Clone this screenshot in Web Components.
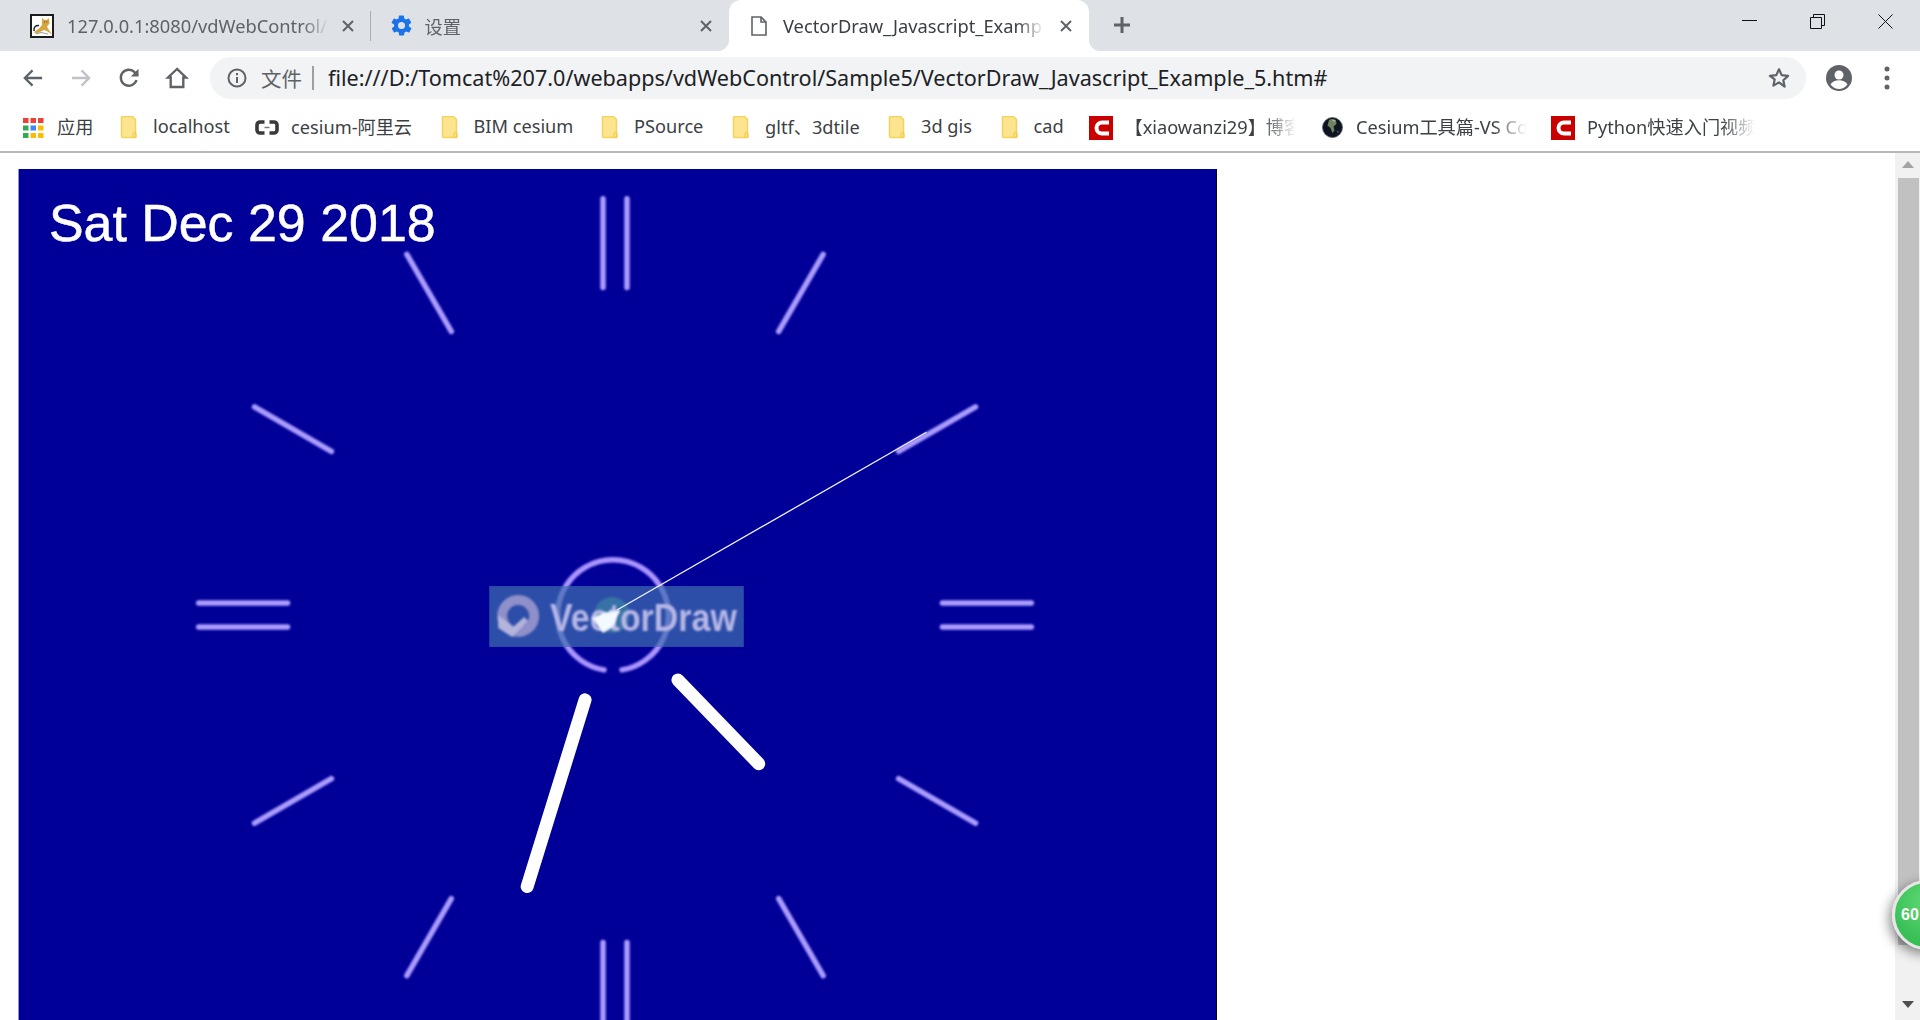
<!DOCTYPE html>
<html>
<head>
<meta charset="utf-8">
<title>VectorDraw_Javascript_Example_5</title>
<style>
html, body { margin: 0; height: 100%; overflow: hidden; background: #fff; }
body { display: flex; flex-direction: column; font-family: "Noto Sans", "Noto Sans CJK SC", sans-serif; }
</style>
</head>
<body>
<tab-strip>
  <browser-tab width="371" pad="30" gap="13" title-width="262" sep>
    <svg slot="icon" width="24" height="24" viewBox="0 0 24 24"><rect x="1" y="1" width="22" height="22" fill="#fff" stroke="#1c1c1c" stroke-width="2"/><path d="M12 4l2 1.800h3L19 4l.5 5.500-2.500 3 1 2 4 6-4.500-3-3.500-1.500-5 2.500-3.500 1-1.500-1.500 5-3.500 3-3.500z" fill="#d8a640"/><path d="M9 11.500C6 11 3.500 13 4 17" fill="none" stroke="#222" stroke-width="1.500"/><path d="M6 20l5-1.500 7 1.500" fill="none" stroke="#999" stroke-width="1"/><path d="M14 8h.8M16.500 8h.8" stroke="#333"/></svg>
    127.0.0.1:8080/vdWebControl/
  </browser-tab>
  <browser-tab width="358" pad="19.5" gap="13" title-width="240">
    <svg slot="icon" width="21" height="21" viewBox="1.500 1.500 21 21"><path fill="#1a73e8" d="M19.400 13a7.600 7.600 0 0 0 0-2l2.100-1.600a.5.5 0 0 0 .1-.6l-2-3.500a.5.5 0 0 0-.6-.2l-2.500 1a7.300 7.300 0 0 0-1.700-1l-.4-2.700a.5.5 0 0 0-.5-.4h-4a.5.5 0 0 0-.5.4l-.4 2.700a7.600 7.600 0 0 0-1.700 1l-2.500-1a.5.5 0 0 0-.6.2l-2 3.500a.5.5 0 0 0 .1.6L4.600 11a7.600 7.600 0 0 0 0 2l-2.100 1.600a.5.5 0 0 0-.1.6l2 3.500a.5.5 0 0 0 .6.2l2.500-1a7.300 7.300 0 0 0 1.700 1l.4 2.700a.5.5 0 0 0 .5.4h4a.5.5 0 0 0 .5-.4l.4-2.700a7.600 7.600 0 0 0 1.700-1l2.500 1a.5.5 0 0 0 .6-.2l2-3.500a.5.5 0 0 0-.1-.6zM12 15.500a3.500 3.500 0 1 1 0-7 3.500 3.500 0 0 1 0 7z"/></svg>
    设置
  </browser-tab>
  <browser-tab width="360" pad="22" gap="16" title-width="261" active>
    <svg slot="icon" width="16" height="20" viewBox="0 0 16 20"><path d="M1 1h9l5 5v13H1z M10 1v5h5" fill="#fff" stroke="#5f6368" stroke-width="1.600"/></svg>
    VectorDraw_Javascript_Example_5
  </browser-tab>
  <svg class="plus" width="20" height="20" viewBox="0 0 20 20"><path d="M10 2v16M2 10h16" stroke="#5f6368" stroke-width="3"/></svg>
  <window-buttons></window-buttons>
</tab-strip>
<nav-bar url="file:///D:/Tomcat%207.0/webapps/vdWebControl/Sample5/VectorDraw_Javascript_Example_5.htm#"></nav-bar>
<bookmark-bar>
  <bookmark-item icon="apps" w="36">应用</bookmark-item>
  <bookmark-item icon="folder" w="78">localhost</bookmark-item>
  <bookmark-item icon="cloud" w="122.500">cesium-阿里云</bookmark-item>
  <bookmark-item icon="folder" w="100.500">BIM cesium</bookmark-item>
  <bookmark-item icon="folder" w="71">PSource</bookmark-item>
  <bookmark-item icon="folder" w="96">gltf、3dtile</bookmark-item>
  <bookmark-item icon="folder" w="52.500">3d gis</bookmark-item>
  <bookmark-item icon="folder" w="31">cad</bookmark-item>
  <bookmark-item icon="csdn" w="171.500" fade>【xiaowanzi29】博客</bookmark-item>
  <bookmark-item icon="globe" w="171" fade>Cesium工具篇-VS Code</bookmark-item>
  <bookmark-item icon="csdn" w="168" fade>Python快速入门视频</bookmark-item>
</bookmark-bar>
<page-view>
  <clock-canvas date="Sat Dec 29 2018"></clock-canvas>
</page-view>
<fps-badge>60</fps-badge>

<script>
const X_ICON = '<svg width="12" height="12" viewBox="0 0 12 12"><path d="M1 1l10 10M11 1L1 11" stroke="#5f6368" stroke-width="2"/></svg>';

class TabStrip extends HTMLElement {
  constructor() {
    super();
    this.attachShadow({ mode: 'open' }).innerHTML = `
<style>
:host { display: flex; align-items: flex-end; height: 51px; background: #dee1e6; flex: none; position: relative; }
::slotted(svg.plus) { align-self: center; margin-left: 23px; margin-top: -1px; }
</style>
<slot></slot>`;
  }
}

class BrowserTab extends HTMLElement {
  constructor() {
    super();
    const w = this.getAttribute('width');
    const pad = this.getAttribute('pad');
    const gap = this.getAttribute('gap');
    const tw = this.getAttribute('title-width');
    const flare = 'content: ""; position: absolute; bottom: 0; width: 12px; height: 12px;';
    this.attachShadow({ mode: 'open' }).innerHTML = `
<style>
:host { display: flex; align-items: center; height: 51px; width: ${w}px; box-sizing: border-box; padding-left: ${pad}px; position: relative; flex: none; color: #5f6368; font-size: 18.3px; }
:host([active]) { background: #fff; border-radius: 12px 12px 0 0; color: #3c4043; }
:host([active])::before { ${flare} left: -12px; background: radial-gradient(circle at 0 0, transparent 12px, #fff 12.500px); }
:host([active])::after { ${flare} right: -12px; background: radial-gradient(circle at 100% 0, transparent 12px, #fff 12.500px); }
:host([sep])::after { content: ''; position: absolute; right: 0; top: 11px; height: 30px; width: 1px; background: #a9acb1; }
.icon { display: flex; flex: none; }
.title { width: ${tw}px; margin-left: ${gap}px; white-space: nowrap; overflow: hidden; -webkit-mask-image: linear-gradient(90deg, #000 90%, transparent); mask-image: linear-gradient(90deg, #000 90%, transparent); }
.close { display: flex; margin-left: auto; margin-right: 17px; }
</style>
<span class="icon"><slot name="icon"></slot></span>
<span class="title"><slot></slot></span>
<span class="close">${X_ICON}</span>`;
  }
}

class WindowButtons extends HTMLElement {
  constructor() {
    super();
    this.attachShadow({ mode: 'open' }).innerHTML = `
<style>
:host { display: flex; position: absolute; right: 27px; top: 14px; gap: 53px; }
svg { display: block; }
</style>
<svg width="15" height="15" viewBox="0 0 15 15"><path d="M0 6.500h15" stroke="#111" stroke-width="1"/></svg>
<svg width="15" height="15" viewBox="0 0 15 15"><path d="M.5 3.500h11v11H.5zM3.500 3V.5h11v11H12" fill="none" stroke="#111"/></svg>
<svg width="15" height="15" viewBox="0 0 15 15"><path d="M.5.5l14 14M14.500 .5l-14 14" stroke="#111" fill="none"/></svg>`;
  }
}

class NavBar extends HTMLElement {
  constructor() {
    super();
    this.attachShadow({ mode: 'open' }).innerHTML = `
<style>
:host { display: flex; align-items: center; height: 53px; flex: none; background: #fff; position: relative; }
.btns { display: flex; width: 210px; flex: none; padding-left: 21px; box-sizing: border-box; gap: 24px; }
.btns svg { display: block; }
.omni { flex: none; width: 1596px; height: 42px; margin-top: 1px; border-radius: 21px; background: #f1f3f4; display: flex; align-items: center; position: relative; }
.info { margin-left: 17px; display: block; }
.scheme { margin-left: 14px; font-size: 20.500px; color: #5f6368; }
.div { width: 2px; height: 24px; background: #9aa0a6; margin: 0 14px 0 10px; }
.url { font-size: 21.600px; color: #202124; white-space: nowrap; padding-bottom: 2px; }
.star { position: absolute; left: 1558px; top: 10px; }
.user { margin-left: 20px; display: block; }
.dots { margin-left: 32px; display: block; }
</style>
<div class="btns">
  <svg width="24" height="24" viewBox="0 0 25 24"><path d="M22 12H4M12 4l-8 8 8 8" fill="none" stroke="#5f6368" stroke-width="2.400"/></svg>
  <svg width="24" height="24" viewBox="0 0 25 24"><path d="M3 12h18M13 4l8 8-8 8" fill="none" stroke="#c0c2c5" stroke-width="2.400"/></svg>
  <svg width="24" height="24" viewBox="0 0 24 24"><path d="M19.500 14a8 8 0 1 1-1.700-7.600L21 9.500" fill="none" stroke="#5f6368" stroke-width="2.400"/><path d="M21.500 2.800v7.700h-7.700z" fill="#5f6368"/></svg>
  <svg width="24" height="24" viewBox="0 0 24 24"><path d="M12 3L3 11.500h2.700V21h12.600v-9.500H21z" fill="none" stroke="#5f6368" stroke-width="2.400"/></svg>
</div>
<div class="omni">
  <svg class="info" width="20" height="20" viewBox="0 0 20 20"><circle cx="10" cy="10" r="8.500" fill="none" stroke="#5f6368" stroke-width="2"/><path d="M10 9v6M10 5v2.200" stroke="#5f6368" stroke-width="2"/></svg>
  <span class="scheme">文件</span>
  <span class="div"></span>
  <span class="url">${this.getAttribute('url')}</span>
  <svg class="star" width="22" height="22" viewBox="0 0 24 24"><path d="M12 2.500l2.900 6.400 7 .8-5.200 4.700 1.400 6.900L12 16.800l-6.100 3.500 1.400-6.900L2.100 9.700l7-.8z" fill="none" stroke="#5f6368" stroke-width="2.400" stroke-linejoin="round"/></svg>
</div>
<svg class="user" width="26" height="26" viewBox="0 0 26 26"><circle cx="13" cy="13" r="13" fill="#5f6368"/><circle cx="13" cy="10" r="4.500" fill="#fff"/><path d="M4.500 19.500c2-3.200 5-4.200 8.500-4.200s6.500 1 8.500 4.200C19 22.500 16 24 13 24s-6-1.500-8.500-4.500z" fill="#fff"/></svg>
<svg class="dots" width="6" height="24" viewBox="0 0 6 24"><circle cx="3" cy="3" r="2.500" fill="#5f6368"/><circle cx="3" cy="12" r="2.500" fill="#5f6368"/><circle cx="3" cy="21" r="2.500" fill="#5f6368"/></svg>`;
  }
}

class BookmarkBar extends HTMLElement {
  constructor() {
    super();
    this.attachShadow({ mode: 'open' }).innerHTML = `
<style>
:host { display: flex; align-items: center; flex: none; padding-left: 21px; gap: 24px; background: #fff; border-bottom: 2px solid #b8b8b8; height: 47px; }
</style>
<slot></slot>`;
  }
}

const BOOKMARK_ICONS = {
  apps: `<svg width="21" height="20" viewBox="0 0 21 20">${['#ea4335', '#ea4335', '#ea4335', '#34a853', '#4285f4', '#fbbc05', '#34a853', '#fbbc05', '#fbbc05'].map((c, i) => `<rect x="${(i % 3) * 7.5}" y="${Math.floor(i / 3) * 7.5}" width="5.500" height="5" fill="${c}"/>`).join('')}</svg>`,
  folder: `<svg width="18" height="23" viewBox="0 0 18 23"><path d="M1.500 1.500a1 1 0 0 1 1-1h10l3 3v18h-13a1 1 0 0 1-1-1z" fill="#fde48e" stroke="#f4d25c" stroke-width="1.500"/><path d="M13 22v-4a1 1 0 0 1 3 0v4" fill="none" stroke="#f0c940"/></svg>`,
  cloud: `<svg width="24" height="15" viewBox="0 0 24 15"><path d="M9.500 2H5A3 3 0 0 0 2 5v5a3 3 0 0 0 3 3h4.500M14.500 2H19a3 3 0 0 1 3 3v5a3 3 0 0 1-3 3h-4.500" fill="none" stroke="#3a3a3a" stroke-width="3.600"/><path d="M9.500 7.500h5" stroke="#777" stroke-width="1.400"/></svg>`,
  csdn: `<svg width="24" height="24" viewBox="0 0 24 24"><rect width="24" height="24" fill="#c80000"/><path d="M20 6.500h-7a5.500 5.500 0 0 0 0 11h7" fill="none" stroke="#fff" stroke-width="4"/></svg>`,
  globe: `<svg width="21" height="21" viewBox="0 0 21 21"><circle cx="10.500" cy="10.500" r="10" fill="#0d1420" stroke="#5a6068" stroke-width=".8"/><path d="M7 3c3-1.500 5-1 7 .5l.5 3.500-3 2.500 1 4-2 2.500-2-5-3-2.500z" fill="#6f8262"/><path d="M10 3l3 .5-.5 1.500z" fill="#c8ccc0"/><path d="M14.500 14.500l2-1 0 3z" fill="#4d6552"/></svg>`
};

class BookmarkItem extends HTMLElement {
  constructor() {
    super();
    const icon = this.getAttribute('icon');
    const fade = this.hasAttribute('fade') ? '-webkit-mask-image: linear-gradient(90deg, #000 80%, transparent); mask-image: linear-gradient(90deg, #000 80%, transparent);' : '';
    this.attachShadow({ mode: 'open' }).innerHTML = `
<style>
:host { display: flex; align-items: center; gap: 12px; flex: none; color: #3c4043; font-size: 18.200px; }
.ic { display: flex; width: 24px; justify-content: center; }
.tx { width: ${this.getAttribute('w')}px; white-space: nowrap; overflow: hidden; padding-bottom: 3px; ${fade} }
</style>
<span class="ic">${BOOKMARK_ICONS[icon]}</span><span class="tx"><slot></slot></span>`;
  }
}

class PageView extends HTMLElement {
  constructor() {
    super();
    this.attachShadow({ mode: 'open' }).innerHTML = `
<style>
:host { display: flex; flex: 1; min-height: 0; overflow: hidden; background: #fff; }
.content { flex: 1; min-width: 0; padding: 16px 0 0 18px; overflow: hidden; }
.track { flex: none; width: 25px; background: #f1f1f1; display: flex; flex-direction: column; align-items: center; }
.up { margin-top: 8px; width: 0; height: 0; border: 6px solid transparent; border-top: 0; border-bottom: 7px solid #a3a3a3; }
.thumb { width: 21px; height: 767px; background: #c1c1c1; margin-top: 10px; margin-left: 2px; }
.down { margin-top: 56px; width: 0; height: 0; border: 6px solid transparent; border-bottom: 0; border-top: 7px solid #505050; }
</style>
<div class="content"><slot></slot></div>
<div class="track"><span class="up"></span><span class="thumb"></span><span class="down"></span></div>`;
  }
}

class ClockCanvas extends HTMLElement {
  constructor() {
    super();
    // centre of the dial relative to the canvas box
    const cx = 597, cy = 446;
    const ticks = [];
    for (let h = 0; h < 12; h++) {
      const a = h * Math.PI / 6;
      const s = Math.sin(a), c = Math.cos(a);
      const offs = h % 3 === 0 ? [-12, 12] : [0];
      offs.forEach(o => {
        const px = c * o, py = s * o;
        ticks.push(`<line x1="${cx + s * 328 + px}" y1="${cy - c * 328 + py}" x2="${cx + s * 417 + px}" y2="${cy - c * 417 + py}"/>`);
      });
    }
    this.attachShadow({ mode: 'open' }).innerHTML = `
<style>
:host { display: block; width: 1199px; height: 900px; }
svg { display: block; background: #000098; border-right: 1px solid #000; border-left: 1px solid #8f8fc8; box-sizing: border-box; }
.tick { stroke: #ac9cff; stroke-width: 5.500; stroke-linecap: round; filter: url(#soft); }
.hand { stroke: #fff; stroke-width: 13; stroke-linecap: round; }
text { font-family: "Liberation Sans", sans-serif; }
</style>
<svg width="1199" height="900" viewBox="0 0 1199 900">
  <defs><filter id="soft" x="-20%" y="-20%" width="140%" height="140%"><feGaussianBlur stdDeviation=".9"/></filter></defs>
  <g class="tick">${ticks.join('')}</g>
  <text x="30" y="71" font-size="52" fill="#fff" stroke="#fff" stroke-width=".5">${this.getAttribute('date')}</text>
  <path d="M${cx - 11} ${cy + 55} A55.500 55.500 0 1 1 ${cx + 7} ${cy + 55}" fill="none" stroke="#ac94ff" stroke-width="5.500" stroke-linecap="round" filter="url(#soft)"/>
  <rect x="471" y="417" width="255" height="61" fill="rgb(63,109,175)" fill-opacity=".7"/>
  <circle cx="594" cy="446" r="18" fill="#3a7fa5" fill-opacity=".75" filter="url(#soft)"/>
  <g filter="url(#soft)">
    <circle cx="500" cy="447" r="16" fill="none" stroke="#8f8fca" stroke-width="10"/>
    <path d="M480 446v13l14 9 16-16-4-4-11 10z" fill="#b4b4dc"/>
    <text x="532" y="462" font-size="38" font-weight="bold" fill="#b7b7e6" textLength="187" lengthAdjust="spacingAndGlyphs">VectorDraw</text>
  </g>
  <path d="M574 449l11-5 17-3-7 17-10 6z" fill="#f4f8ff" filter="url(#soft)"/>
  <line class="hand" x1="567" y1="531" x2="509" y2="718"/>
  <line class="hand" x1="660" y1="511" x2="741" y2="595"/>
  <line x1="599" y1="441" x2="909" y2="263" stroke="#f2f2ff" stroke-width="1.300"/>
</svg>`;
  }
}

class FpsBadge extends HTMLElement {
  constructor() {
    super();
    this.attachShadow({ mode: 'open' }).innerHTML = `
<style>
:host { position: absolute; left: 1892px; top: 880px; width: 70px; height: 70px; box-sizing: border-box; border-radius: 50%; border: 3px solid #e6e6e6; background: radial-gradient(circle at 50% 30%, #5fd873, #38bf55 70%); box-shadow: -3px 4px 12px rgba(0,0,0,.45); color: #fff; font: bold 16px "Liberation Sans", sans-serif; line-height: 64px; padding-left: 6px; }
</style>
<slot></slot>`;
  }
}

customElements.define('tab-strip', TabStrip);
customElements.define('browser-tab', BrowserTab);
customElements.define('window-buttons', WindowButtons);
customElements.define('nav-bar', NavBar);
customElements.define('bookmark-bar', BookmarkBar);
customElements.define('bookmark-item', BookmarkItem);
customElements.define('page-view', PageView);
customElements.define('clock-canvas', ClockCanvas);
customElements.define('fps-badge', FpsBadge);
</script>
</body>
</html>
